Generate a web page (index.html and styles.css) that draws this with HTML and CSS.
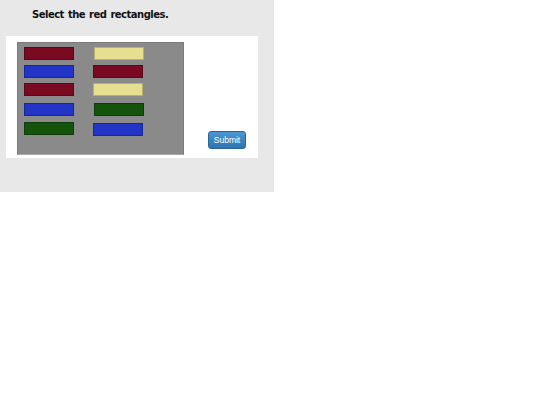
FILE: index.html
```html
<!DOCTYPE html>
<html>
<head>
<meta charset="utf-8">
<link rel="stylesheet" href="styles.css">
</head>
<body>
<div class="frame">
  <div class="prompt">Select the red rectangles.</div>
  <div class="panel">
    <div class="canvas">
      <div class="rect red" style="left:6px;top:4px"></div>
      <div class="rect yellow" style="left:76px;top:4px"></div>
      <div class="rect blue" style="left:6px;top:22px"></div>
      <div class="rect red" style="left:75px;top:22px"></div>
      <div class="rect red" style="left:6px;top:40px"></div>
      <div class="rect yellow" style="left:75px;top:40px"></div>
      <div class="rect blue" style="left:6px;top:60px"></div>
      <div class="rect green" style="left:76px;top:60px"></div>
      <div class="rect green" style="left:6px;top:79px"></div>
      <div class="rect blue" style="left:75px;top:80px"></div>
    </div>
    <div class="side">
      <button class="submit">Submit</button>
    </div>
  </div>
</div>
</body>
</html>
```
FILE: styles.css
```css
html, body {
  margin: 0;
  padding: 0;
  background: #ffffff;
}
.frame {
  width: 274px;
  height: 192px;
  background: #e8e8e8;
  box-sizing: border-box;
  padding-top: 8px;
}
.prompt {
  font-family: "Comic Sans MS", "DejaVu Sans", sans-serif;
  font-weight: bold;
  font-size: 10px;
  color: #111;
  margin-left: 32px;
  height: 14px;
  line-height: 14px;
  letter-spacing: -0.5px;
  word-spacing: 1px;
}
.panel {
  margin-top: 14px;
  margin-left: 6px;
  width: 252px;
  height: 122px;
  background: #ffffff;
  display: flex;
  box-sizing: border-box;
  padding: 6px 0 0 11px;
}
.canvas {
  position: relative;
  width: 167px;
  height: 113px;
  background: #8a8a8a;
  box-sizing: border-box;
  border: 1px solid #7c7c7c;
  border-bottom-color: #a8a8a8;
}
.rect {
  position: absolute;
  width: 50px;
  height: 13px;
  box-sizing: border-box;
  border: 1px solid rgba(0,0,0,0.25);
}
.red { background: #790a22; }
.blue { background: #2235c6; }
.yellow { background: #e5df8f; border-color: #b8b070; }
.green { background: #13530c; }
.side {
  flex: 1;
  display: flex;
  align-items: flex-end;
  padding-left: 24px;
  padding-bottom: 9px;
}
.submit {
  width: 38px;
  height: 18px;
  padding: 0;
  border: 1px solid #2a6596;
  border-radius: 3px;
  background: linear-gradient(#4c97d3, #2f74b0);
  color: #ffffff;
  font-family: "Liberation Sans", Arial, sans-serif;
  font-size: 8.5px;
  line-height: 16px;
  text-align: center;
}
```
